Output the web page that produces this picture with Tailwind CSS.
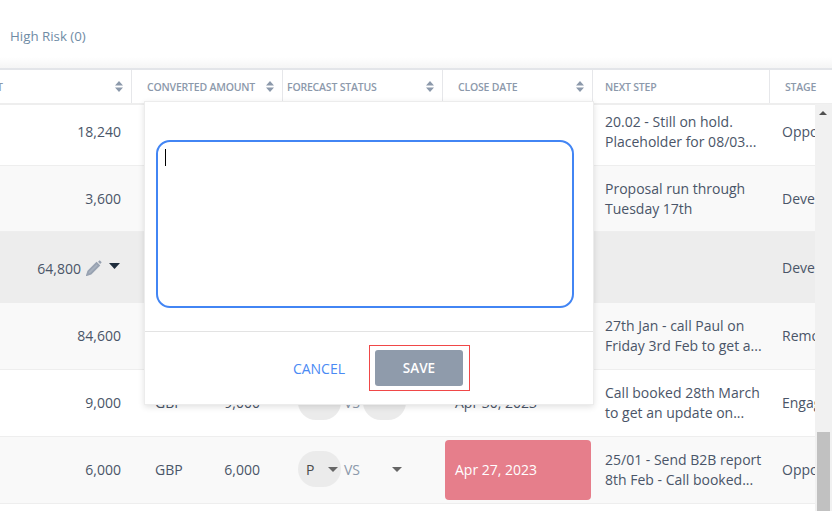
<!DOCTYPE html>
<html lang="en">
<head>
    <meta charset="UTF-8" />
    <title>Opportunities</title>
    <script src="https://cdn.jsdelivr.net/npm/@tailwindcss/browser@4"></script>
</head>
<body class="relative w-[832px] h-[511px] overflow-hidden bg-white font-['Open_Sans',sans-serif] text-[14px] text-[#4a5568]">
    <!-- Tabs -->
    <div class="h-[57px] pl-[10px] pt-[26px] text-[13.3px] leading-[20px] text-[#6f8ba5]">High Risk (0)</div>
    <div class="h-[11px] bg-gradient-to-b from-white to-[#f5f5f5]"></div>

    <!-- Header -->
    <div class="grid grid-cols-[132px_151px_160px_150px_177px_63px] h-[37px] border-t-2 border-b-2 border-t-[#e3e5e9] border-b-[#eeeeee] text-[10.5px] font-semibold text-[#8c99ab] tracking-[-0.2px]">
        <div class="flex items-center justify-between pr-[8px] border-r border-[#e6e7ea]">
            <span class="-ml-[3px] mt-[2px]">T</span>
            <svg width="8" height="11" viewBox="0 0 8 11" fill="#8c99ab"><path d="M4 0 8 4.500H0zM0 6.500h8L4 11z"/></svg>
        </div>
        <div class="flex items-center justify-between pl-[15px] pr-[8px] border-r border-[#e6e7ea]">
            <span class="mt-[2px]">CONVERTED AMOUNT</span>
            <svg width="8" height="11" viewBox="0 0 8 11" fill="#8c99ab"><path d="M4 0 8 4.500H0zM0 6.500h8L4 11z"/></svg>
        </div>
        <div class="flex items-center justify-between pl-[4px] pr-[8px] border-r border-[#e6e7ea]">
            <span class="mt-[2px]">FORECAST STATUS</span>
            <svg width="8" height="11" viewBox="0 0 8 11" fill="#8c99ab"><path d="M4 0 8 4.500H0zM0 6.500h8L4 11z"/></svg>
        </div>
        <div class="flex items-center justify-between pl-[15px] pr-[8px] border-r border-[#e6e7ea]">
            <span class="mt-[2px]">CLOSE DATE</span>
            <svg width="8" height="11" viewBox="0 0 8 11" fill="#8c99ab"><path d="M4 0 8 4.500H0zM0 6.500h8L4 11z"/></svg>
        </div>
        <div class="flex items-center pl-[12px] pt-[2px] border-r border-[#e6e7ea]">NEXT STEP</div>
        <div class="flex items-center pl-[15px] pt-[2px]">STAGE</div>
    </div>

    <!-- Rows -->
    <div class="grid grid-cols-[132px_151px_160px_150px_177px_63px] h-[61px] pb-[6px] border-b border-[#eeeeee] bg-white items-center overflow-hidden">
        <div class="pr-[11px] pb-[2px] text-right">18,240</div>
        <div></div><div></div><div></div>
        <div class="pl-[12px] leading-[20px]">20.02 - Still on hold.<br />Placeholder for 08/03...</div>
        <div class="pl-[12px] pb-[2px] whitespace-nowrap">Opportunity</div>
    </div>
    <div class="grid grid-cols-[132px_151px_160px_150px_177px_63px] h-[66px] border-b border-[#eeeeee] bg-[#f9f9f9] items-center overflow-hidden">
        <div class="pr-[11px] text-right">3,600</div>
        <div></div><div></div><div></div>
        <div class="pl-[12px] leading-[20px]">Proposal run through<br />Tuesday 17th</div>
        <div class="pl-[12px] whitespace-nowrap">Develop</div>
    </div>
    <div class="grid grid-cols-[132px_151px_160px_150px_177px_63px] h-[71px] bg-[#ededed] items-center overflow-hidden">
        <div class="flex items-center justify-end pr-[12px]">
            <span class="mt-[2px]">64,800</span>
            <svg class="ml-[5px] mt-[1px]" width="16" height="16" viewBox="0 0 16 16"><path d="M10.500 3 13 5.500 4.800 13.700 1 15 2.300 11.200z" fill="#a9b2bf" stroke="#98a2b1" stroke-width="1.800"/><path d="M12 1.800 13.700 .3 15.700 2.300 14.200 4z" fill="#98a2b1"/></svg>
            <svg class="ml-[7px] mb-[3px]" width="11" height="6" viewBox="0 0 11 6" fill="#1f2d3d"><path d="M0 0h11L5.500 6z"/></svg>
        </div>
        <div></div><div></div><div></div><div></div>
        <div class="pl-[12px] whitespace-nowrap">Develop</div>
    </div>
    <div class="grid grid-cols-[132px_151px_160px_150px_177px_63px] h-[67px] border-b border-[#eeeeee] bg-[#f9f9f9] items-center overflow-hidden">
        <div class="pr-[11px] pb-[2px] text-right">84,600</div>
        <div></div><div></div><div></div>
        <div class="pl-[12px] leading-[20px]">27th Jan - call Paul on<br />Friday 3rd Feb to get a...</div>
        <div class="pl-[12px] pb-[2px] whitespace-nowrap">Remove</div>
    </div>
    <div class="grid grid-cols-[132px_151px_160px_150px_177px_63px] h-[67px] border-b border-[#eeeeee] bg-white items-center overflow-hidden">
        <div class="pr-[11px] pb-[2px] text-right">9,000</div>
        <div class="flex justify-between pl-[23px] pr-[23px] pb-[2px]"><span>GBP</span><span>9,000</span></div>
        <div class="flex items-center pl-[15px] pb-[2px] text-[#8c99ab]">
            <span class="w-[43px] h-[36px] rounded-full bg-[#ebebeb]"></span>
            <span class="mx-[3px]">VS</span>
            <span class="w-[43px] h-[36px] rounded-full bg-[#ebebeb]"></span>
        </div>
        <div class="pl-[12px] pb-[2px]">Apr 30, 2023</div>
        <div class="pl-[12px] leading-[20px]">Call booked 28th March<br />to get an update on...</div>
        <div class="pl-[12px] pb-[2px] whitespace-nowrap">Engaged</div>
    </div>
    <div class="grid grid-cols-[132px_151px_160px_150px_177px_63px] h-[67px] border-b border-[#eeeeee] bg-[#f9f9f9] items-center overflow-hidden">
        <div class="pr-[11px] pb-[2px] text-right">6,000</div>
        <div class="flex justify-between pl-[23px] pr-[23px] pb-[2px]"><span>GBP</span><span>6,000</span></div>
        <div class="flex items-center pl-[15px] pb-[2px] text-[#8c99ab]">
            <span class="flex items-center justify-between w-[43px] h-[36px] pl-[8px] pr-[3px] rounded-full bg-[#ebebeb] text-[#4a4a4a]">P
                <svg width="10" height="5" viewBox="0 0 10 5" fill="#666666"><path d="M0 0h10L5 5z"/></svg>
            </span>
            <span class="ml-[3px]">VS</span>
            <svg class="ml-[32px]" width="10" height="5" viewBox="0 0 10 5" fill="#666666"><path d="M0 0h10L5 5z"/></svg>
        </div>
        <div class="flex items-center h-[60px] w-[146px] ml-[2px] pl-[10px] pb-[2px] rounded-[4px] bg-[#e67e8b] text-white">Apr 27, 2023</div>
        <div class="pl-[12px] leading-[20px]">25/01 - Send B2B report<br />8th Feb - Call booked...</div>
        <div class="pl-[12px] pb-[2px] whitespace-nowrap">Opportunity</div>
    </div>

    <!-- Scrollbar -->
    <div class="absolute right-0 top-[104px] bottom-0 w-[17px] bg-[#f1f1f1]">
        <svg class="absolute left-[4px] top-[7px]" width="8" height="4" viewBox="0 0 8 4" fill="#505050"><path d="M4 0l4 4H0z"/></svg>
        <div class="absolute left-[2px] w-[13px] top-[328px] bottom-0 bg-[#c1c1c1]"></div>
    </div>

    <!-- Edit popover -->
    <div class="absolute left-[144px] top-[101px] w-[450px] h-[304px] bg-white border border-[#ececec] shadow-[0_2px_6px_rgba(0,0,0,0.12)]">
        <div class="h-[229px] pl-[11px] pt-[38px]">
            <div class="w-[418px] h-[168px] pl-[7px] pt-[7px] rounded-[14px] border-2 border-[#4285f4]">
                <div class="w-px h-[17px] bg-black"></div>
            </div>
        </div>
        <div class="flex items-center justify-end h-[73px] border-t border-[#e3e3e3] pr-[123px]">
            <span class="mr-[24px] text-[#4a8af4]">CANCEL</span>
            <div class="pt-[4px] pb-[4px] pl-[5px] pr-[6px] border border-[#f04848]">
                <button class="block w-[88px] h-[36px] rounded-[3px] bg-[#8f9bab] text-white text-[13.500px] font-semibold">SAVE</button>
            </div>
        </div>
    </div>
</body>
</html>
